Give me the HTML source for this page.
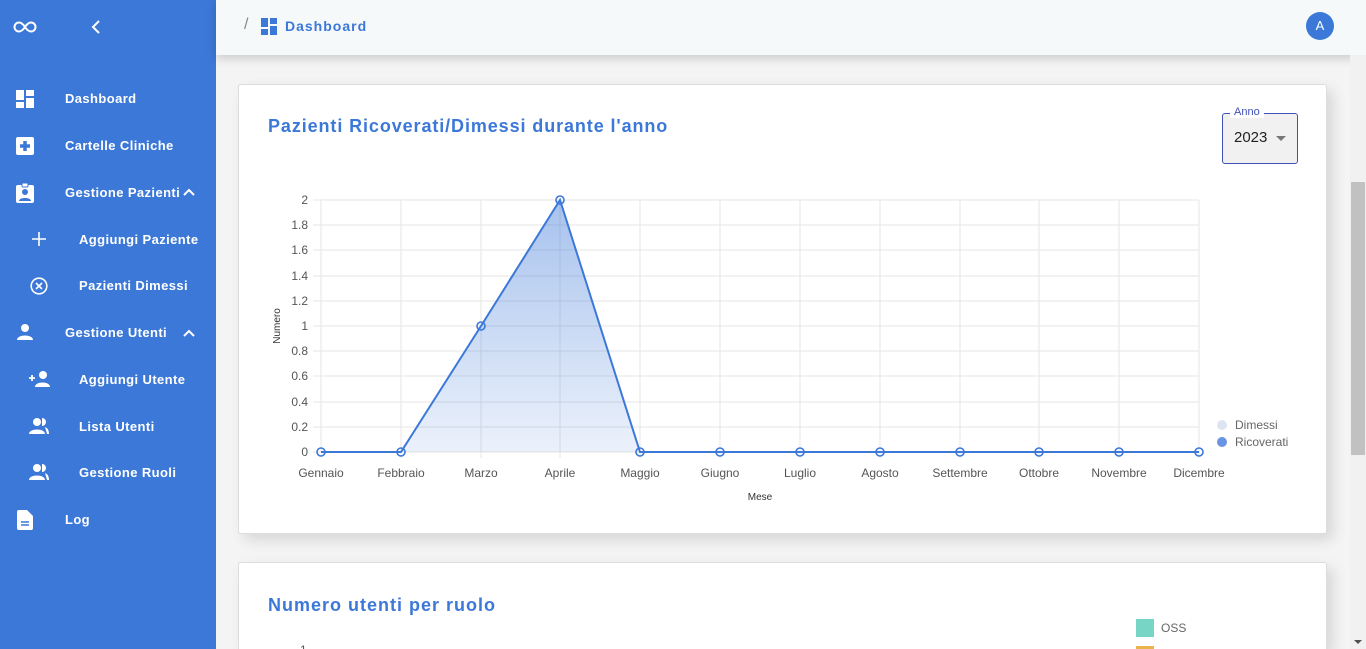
<!DOCTYPE html>
<html style="width:1366px;height:649px;overflow:hidden"><head><meta charset="utf-8"><style>
*{margin:0;padding:0;box-sizing:border-box}
body{width:1366px;height:649px;overflow:hidden;background:#f4f4f4;font-family:"Liberation Sans",sans-serif;position:relative}
#side{position:absolute;left:0;top:0;width:216px;height:649px;background:#3c78d8;color:#fff}
.it{position:absolute;font-weight:bold;font-size:13px;color:#fff;white-space:nowrap;letter-spacing:.4px}
#top{position:absolute;left:216px;top:0;width:1150px;height:55px;background:#f5f9fa;box-shadow:0 3px 10px rgba(0,0,0,.18);z-index:3}
.card{position:absolute;left:238px;width:1089px;background:#fff;border:1px solid #ddd;border-radius:3px;box-shadow:6px 6px 14px rgba(0,0,0,.12)}
h2{position:absolute;font-size:18px;color:#3c78d8;font-weight:bold;white-space:nowrap}
#sb{position:absolute;left:1350px;top:55px;width:16px;height:594px;background:#f1f1f1;z-index:4}
</style></head><body>
<div id="side">
<svg style="position:absolute;left:13px;top:20px" width="24" height="14" viewBox="0 0 24 14"><path d="M6 2.5a4.5 4.5 0 1 0 0 9c3 0 5-3 6-4.5s3-4.5 6-4.5a4.5 4.5 0 1 1 0 9c-3 0-5-3-6-4.5S9 2.5 6 2.5z" fill="none" stroke="#fff" stroke-width="2"/></svg>
<svg style="position:absolute;left:91px;top:20px" width="10" height="14"><path d="M8 1L2 7l6 6" fill="none" stroke="#fff" stroke-width="2"/></svg>
<svg style="position:absolute;left:16px;top:90px" width="18" height="18"><rect x="0" y="0" width="8" height="10" fill="#fff"/><rect x="0" y="12" width="8" height="6" fill="#fff"/><rect x="10" y="0" width="8" height="6" fill="#fff"/><rect x="10" y="8" width="8" height="10" fill="#fff"/></svg>
<div class="it" style="left:65px;top:91px">Dashboard</div>
<svg style="position:absolute;left:16px;top:137px" width="18" height="18"><rect width="18" height="18" rx="2" fill="#fff"/><path d="M9 4v10M4 9h10" stroke="#3c78d8" stroke-width="3.5"/></svg>
<div class="it" style="left:65px;top:138px">Cartelle Cliniche</div>
<svg style="position:absolute;left:16px;top:183px" width="18" height="20"><rect y="2" width="18" height="18" rx="2" fill="#fff"/><rect x="6" y="0" width="6" height="4" rx="1" fill="#fff" stroke="#3c78d8"/><circle cx="9" cy="9" r="3" fill="#3c78d8"/><path d="M3 18c0-4 12-4 12 0z" fill="#3c78d8"/></svg>
<div class="it" style="left:65px;top:185px">Gestione Pazienti</div>
<svg style="position:absolute;left:183px;top:187px" width="12" height="10"><path d="M1 8l5-5 5 5" fill="none" stroke="#fff" stroke-width="2"/></svg>
<svg style="position:absolute;left:32px;top:232px" width="14" height="14"><path d="M7 0v14M0 7h14" stroke="#fff" stroke-width="1.6"/></svg>
<div class="it" style="left:79px;top:232px">Aggiungi Paziente</div>
<svg style="position:absolute;left:30px;top:277px" width="18" height="18"><circle cx="9" cy="9" r="7.8" fill="none" stroke="#fff" stroke-width="1.6"/><path d="M6 6l6 6M12 6l-6 6" stroke="#fff" stroke-width="1.6"/></svg>
<div class="it" style="left:79px;top:278px">Pazienti Dimessi</div>
<svg style="position:absolute;left:17px;top:324px" width="16" height="16"><circle cx="8" cy="4" r="4" fill="#fff"/><path d="M0 16c0-6 16-6 16 0z" fill="#fff"/></svg>
<div class="it" style="left:65px;top:325px">Gestione Utenti</div>
<svg style="position:absolute;left:183px;top:328px" width="12" height="10"><path d="M1 8l5-5 5 5" fill="none" stroke="#fff" stroke-width="2"/></svg>
<svg style="position:absolute;left:29px;top:371px" width="21" height="16"><path d="M0 7h6M3 4v6" stroke="#fff" stroke-width="1.8"/><circle cx="14" cy="4" r="4" fill="#fff"/><path d="M6 16c0-6 15-6 15 0z" fill="#fff"/></svg>
<div class="it" style="left:79px;top:372px">Aggiungi Utente</div>
<svg style="position:absolute;left:29px;top:418px" width="21" height="16"><circle cx="8" cy="4" r="4" fill="#fff"/><path d="M0 16c0-6 16-6 16 0z" fill="#fff"/><path d="M13 0a4 4 0 0 1 0 8M16 9c3 1 4 4 4 7h-2" fill="#fff"/></svg>
<div class="it" style="left:79px;top:419px">Lista Utenti</div>
<svg style="position:absolute;left:29px;top:464px" width="21" height="16"><circle cx="8" cy="4" r="4" fill="#fff"/><path d="M0 16c0-6 16-6 16 0z" fill="#fff"/><path d="M13 0a4 4 0 0 1 0 8M16 9c3 1 4 4 4 7h-2" fill="#fff"/></svg>
<div class="it" style="left:79px;top:465px">Gestione Ruoli</div>
<svg style="position:absolute;left:17px;top:510px" width="16" height="20"><path d="M2 0h8l6 6v12a2 2 0 0 1-2 2H2a2 2 0 0 1-2-2V2a2 2 0 0 1 2-2z" fill="#fff"/><path d="M4 12h8M4 15h8" stroke="#3c78d8" stroke-width="1.5"/></svg>
<div class="it" style="left:65px;top:512px">Log</div>
</div>
<div id="top">
<div style="position:absolute;left:28px;top:16px;color:#888;font-size:16px">/</div>
<svg style="position:absolute;left:45px;top:18px" width="16" height="17"><rect x="0" y="0" width="7" height="9" fill="#3c78d8"/><rect x="0" y="11" width="7" height="6" fill="#3c78d8"/><rect x="9" y="0" width="7" height="6" fill="#3c78d8"/><rect x="9" y="8" width="7" height="9" fill="#3c78d8"/></svg>
<div style="position:absolute;left:69px;top:18px;color:#3c78d8;font-weight:bold;font-size:14px;letter-spacing:1px">Dashboard</div>
<div style="position:absolute;left:1090px;top:12px;width:28px;height:28px;border-radius:50%;background:#3c78d8;color:#fff;font-size:13px;text-align:center;line-height:28px">A</div>
</div>
<div class="card" style="top:84px;height:450px"></div>
<div class="card" style="top:562px;height:87px;border-bottom:none;border-radius:3px 3px 0 0"></div>
<h2 style="left:268px;top:116px;letter-spacing:.9px">Pazienti Ricoverati/Dimessi durante l'anno</h2>
<h2 style="left:268px;top:595px;letter-spacing:1px">Numero utenti per ruolo</h2>
<div style="position:absolute;left:1222px;top:113px;width:76px;height:51px;border:1px solid #3f51b5;border-radius:3px;background:#f1f1f1"></div>
<div style="position:absolute;left:1230px;top:106px;padding:0 4px;background:#fff;color:#3f51b5;font-size:11px">Anno</div>
<div style="position:absolute;left:1234px;top:129px;font-size:15px;color:#222">2023</div>
<svg style="position:absolute;left:1276px;top:136px" width="10" height="5"><path d="M0 0h10L5 5z" fill="#777"/></svg>
<svg style="position:absolute;left:0;top:0" width="1366" height="649" font-family="Liberation Sans, sans-serif" font-size="12" fill="#555">
<defs><linearGradient id="g" x1="0" y1="0" x2="0" y2="1"><stop offset="0" stop-color="#3c78d8" stop-opacity=".45"/><stop offset="1" stop-color="#3c78d8" stop-opacity=".1"/></linearGradient></defs>
<g stroke="#e5e5e5" stroke-width="1">
<path d="M321 200V452M401 200V458M481 200V458M560 200V458M640 200V458M720 200V458M800 200V458M880 200V458M960 200V458M1039 200V458M1119 200V458M1199 200V458"/>
<path d="M313 200H1199M313 225H1199M313 250H1199M313 276H1199M313 301H1199M313 326H1199M313 351H1199M313 376H1199M313 402H1199M313 427H1199M313 452H1199"/>
</g>
<g text-anchor="end">
<text x="308" y="204">2</text><text x="308" y="229">1.8</text><text x="308" y="254">1.6</text><text x="308" y="280">1.4</text><text x="308" y="305">1.2</text><text x="308" y="330">1</text><text x="308" y="355">0.8</text><text x="308" y="380">0.6</text><text x="308" y="406">0.4</text><text x="308" y="431">0.2</text><text x="308" y="456">0</text>
</g>
<g text-anchor="middle">
<text x="321" y="477">Gennaio</text><text x="401" y="477">Febbraio</text><text x="481" y="477">Marzo</text><text x="560" y="477">Aprile</text><text x="640" y="477">Maggio</text><text x="720" y="477">Giugno</text><text x="800" y="477">Luglio</text><text x="880" y="477">Agosto</text><text x="960" y="477">Settembre</text><text x="1039" y="477">Ottobre</text><text x="1119" y="477">Novembre</text><text x="1199" y="477">Dicembre</text>
<text x="760" y="500" font-size="10" fill="#333">Mese</text>
</g>
<text transform="translate(280 326) rotate(-90)" text-anchor="middle" font-size="10" fill="#333">Numero</text>
<path d="M401 452L481 326L560 200L640 452Z" fill="url(#g)"/>
<path d="M321 452H401L481 326L560 200L640 452H1199" fill="none" stroke="#3c78d8" stroke-width="2"/>
<g fill="none" stroke="#3c78d8" stroke-width="1.6">
<circle cx="321" cy="452" r="4"/><circle cx="401" cy="452" r="4"/><circle cx="481" cy="326" r="4"/><circle cx="560" cy="200" r="4"/><circle cx="640" cy="452" r="4"/><circle cx="720" cy="452" r="4"/><circle cx="800" cy="452" r="4"/><circle cx="880" cy="452" r="4"/><circle cx="960" cy="452" r="4"/><circle cx="1039" cy="452" r="4"/><circle cx="1119" cy="452" r="4"/><circle cx="1199" cy="452" r="4"/>
</g>
<circle cx="1222" cy="425" r="5" fill="#dde4f2"/><text x="1235" y="429" fill="#666">Dimessi</text>
<circle cx="1222" cy="442" r="5" fill="#6a95e4"/><text x="1235" y="446" fill="#666">Ricoverati</text>
<rect x="1136" y="619" width="18" height="18" fill="#76d5c4"/><text x="1161" y="632" fill="#666">OSS</text>
<rect x="1136" y="646" width="18" height="6" fill="#e9b44c"/>
<text x="300" y="654" fill="#555">1</text>
</svg>
<div id="sb"><div style="position:absolute;left:1px;top:127px;width:14px;height:273px;background:#c1c1c1"></div><svg style="position:absolute;left:4px;top:585px" width="8" height="5"><path d="M0 0h8L4 4z" fill="#505050"/></svg></div>
</body></html>
